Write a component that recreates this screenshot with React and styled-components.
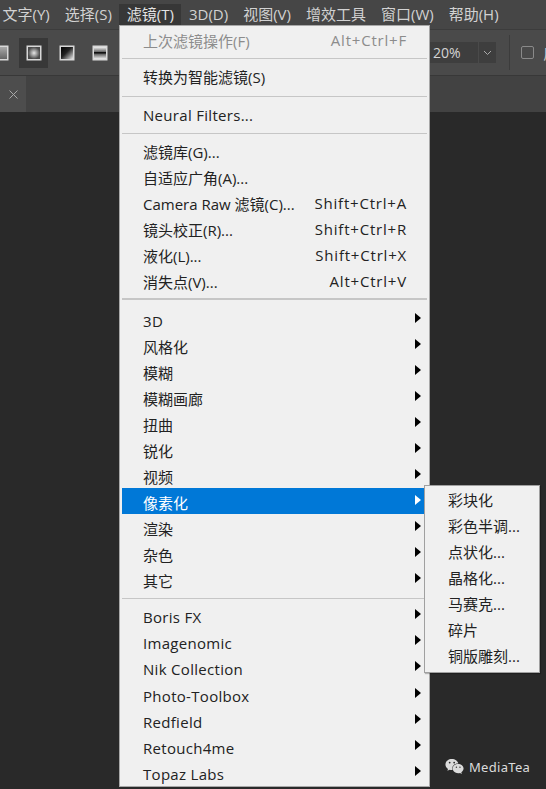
import React from "react";
import styled, { createGlobalStyle } from "styled-components";
import { FaWeixin } from "react-icons/fa";

const Global = createGlobalStyle`
  html, body { margin: 0; padding: 0; background: #292929; }
  body { width: 546px; height: 789px; overflow: hidden; font-family: "Open Sans", "Noto Sans CJK SC", sans-serif; }
`;
const Page = styled.div`
  position: relative; width: 546px; height: 789px; overflow: hidden;
  display: flex; flex-direction: column; background: #292929;
`;
const MenuBar = styled.div`
  height: 29px; flex: none; display: flex; align-items: flex-start; background: #464646;
  border-bottom: 1px solid #3c3c3c;
`;
const MenuTitle = styled.div`
  height: 21px; margin-top: 4px; line-height: 21px; padding: 0 7.5px;
  font-size: 15px; color: ${p => p.$active ? "#e4e4e4" : "#d2d2d2"};
  background: ${p => p.$active ? "#373737" : "transparent"}; white-space: nowrap;
  &:first-child { padding-left: 2.5px; }
`;
const ToolBar = styled.div`
  height: 45px; flex: none; display: flex; align-items: center; background: #4a4a4a;
  border-bottom: 1px solid #383838;
  & > :first-child { margin-left: -14px; }
`;
const ToolIcon = styled.div`
  width: 29px; height: 30px; flex: none; margin-right: ${p => p.$gap || 0}px; display: flex; align-items: center; justify-content: center;
  background: ${p => p.$on ? "#383838" : "transparent"};
`;
const ToolSpacer = styled.div`
  width: ${p => p.$w}px; flex: none;
`;
const Opacity = styled.div`
  width: 48px; height: 21px; line-height: 21px; padding-left: 3px; background: #3e3e3e; flex: none;
  font-size: 14px; color: #d4d4d4; box-sizing: border-box;
`;
const Caret = styled.div`
  width: 17px; height: 21px; margin-left: 1px; background: #3e3e3e; flex: none; display: flex; align-items: center; justify-content: center;
`;
const Divider = styled.div`
  width: 1px; height: 35px; flex: none; margin: 0 11px 0 13px; background: #3c3c3c;
`;
const CheckBox = styled.div`
  width: 11px; height: 11px; flex: none; border: 1px solid #8a8a8a; border-radius: 2px;
`;
const ToolLabel = styled.div`
  margin-left: 9px; font-size: 14px; color: #d2d2d2; white-space: nowrap;
`;
const TabBar = styled.div`
  height: 36px; flex: none; display: flex; background: #424242;
`;
const Tab = styled.div`
  width: 26px; background: #4d4d4d; display: flex; align-items: center; justify-content: center;
`;
const Menu = styled.div`
  position: absolute; left: 119px; top: 25px; width: 311px; height: 762px; box-sizing: border-box;
  background: #f0f0f0; border: 1px solid #a8a8a8; padding: 0 2px;
`;
const Row = styled.div`
  height: ${p => p.$h || 26}px; box-sizing: border-box; display: flex; align-items: center; justify-content: space-between;
  padding: ${p => p.$cjk ? 2 : 4}px 20px 0 21px; font-size: 15px; white-space: nowrap; position: relative;
  letter-spacing: ${p => p.$cjk ? 0 : .3}px;
  color: ${p => p.$off ? "#8c8c8c" : p.$sel ? "#fff" : "#222"};
  background: ${p => p.$sel ? "#0078d7" : "transparent"};
`;
const Keys = styled.span`
  letter-spacing: .8px;
`;
const Sep = styled.div`
  height: ${p => p.$thick ? 2 : 1}px; margin: ${p => p.$top}px 0 ${p => p.$bot}px; background: #c6c6c6;
`;
const Arrow = styled.span`
  position: absolute; right: 6px; top: calc(50% - 1px); transform: translateY(-50%); width: 0; height: 0;
  border-left: 6px solid ${p => p.$sel ? "#fff" : "#000"}; border-top: 5px solid transparent; border-bottom: 5px solid transparent;
`;
const SubMenu = styled.div`
  position: absolute; left: 424px; top: 485px; width: 116px; height: 188px; box-sizing: border-box;
  background: #f0f0f0; border: 1px solid #a0a0a0; padding: 1px 0 0 23px; box-shadow: 1px 1px 1px rgba(0,0,0,.25);
`;
const SubRow = styled.div`
  height: 26px; line-height: 26px; font-size: 15px; color: #222; white-space: nowrap;
`;
const Mark = styled.div`
  position: absolute; left: 445px; top: 757px; display: flex; align-items: center; gap: 5px;
  color: #dcdcdc; font-size: 13px; letter-spacing: .3px; font-family: "Noto Sans", sans-serif;
`;

const Swatch = ({ id, stops, radial, diag, bars }) => (
  <svg width="16" height="16" viewBox="0 0 16 16">
    <defs>
      {radial ? (
        <radialGradient id={id}><stop offset="0" stopColor="#e6e6e6" /><stop offset="1" stopColor="#4a4a4a" /></radialGradient>
      ) : (
        <linearGradient id={id} x1="0" y1="0" x2={diag ? 1 : 0} y2="1">
          {stops.map(([o, c]) => <stop key={o} offset={o} stopColor={c} />)}
        </linearGradient>
      )}
    </defs>
    <rect x="0.5" y="0.5" width="15" height="15" fill="#d8d8d8" />
    <rect x="2" y="2" width="12" height="12" fill={`url(#${id})`} />
    {bars && <rect x="2" y="7" width="12" height="1.5" fill="#111" />}
  </svg>
);

const titles = [
  ["文字(Y)"], ["选择(S)"], ["滤镜(T)", true], ["3D(D)"], ["视图(V)"], ["增效工具"], ["窗口(W)"], ["帮助(H)"],
];
const groups = [
  { rows: [{ t: "上次滤镜操作(F)", k: "Alt+Ctrl+F", off: true }], top: 6, bot: 3 },
  { rows: [{ t: "转换为智能滤镜(S)" }], top: 8, bot: 3 },
  { rows: [{ t: "Neural Filters..." }], top: 7, bot: 3 },
  { rows: [{ t: "滤镜库(G)..." }, { t: "自适应广角(A)..." }, { t: "Camera Raw 滤镜(C)...", k: "Shift+Ctrl+A" }, { t: "镜头校正(R)...", k: "Shift+Ctrl+R" }, { t: "液化(L)...", k: "Shift+Ctrl+X" }, { t: "消失点(V)...", k: "Alt+Ctrl+V" }], thick: true, top: 5, bot: 6 },
  { rows: ["3D", "风格化", "模糊", "模糊画廊", "扭曲", "锐化", "视频", "像素化", "渲染", "杂色", "其它"].map(t => ({ t, a: true, sel: t === "像素化" })), top: 6, bot: 3 },
  { rows: ["Boris FX", "Imagenomic", "Nik Collection", "Photo-Toolbox", "Redfield", "Retouch4me", "Topaz Labs"].map(t => ({ t, a: true })), h: 26.17 },
];
const subs = ["彩块化", "彩色半调...", "点状化...", "晶格化...", "马赛克...", "碎片", "铜版雕刻..."];
const hasCjk = t => /[^\x00-\x7f]/.test(t);

export default function App() {
  return (
    <Page>
      <Global />
      <MenuBar>
        {titles.map(([t, a]) => <MenuTitle key={t} $active={a}>{t}</MenuTitle>)}
      </MenuBar>
      <ToolBar>
        <ToolIcon $gap={4}><Swatch id="a" stops={[[0, "#aaa"], [1, "#666"]]} /></ToolIcon>
        <ToolIcon $on $gap={4}><Swatch id="b" radial /></ToolIcon>
        <ToolIcon $gap={4}><Swatch id="c" diag stops={[[0, "#000"], [.45, "#222"], [1, "#e8e8e8"]]} /></ToolIcon>
        <ToolIcon><Swatch id="d" bars stops={[[0, "#eee"], [.5, "#444"], [1, "#eee"]]} /></ToolIcon>
        <ToolSpacer $w={316} />
        <Opacity>20%</Opacity>
        <Caret>
          <svg width="9" height="6" viewBox="0 0 9 6"><path d="M1 1l3.5 3.5L8 1" fill="none" stroke="#aaa" /></svg>
        </Caret>
        <Divider />
        <CheckBox />
        <ToolLabel>反向</ToolLabel>
      </ToolBar>
      <TabBar>
        <Tab>
          <svg width="9" height="9" viewBox="0 0 9 9"><path d="M.5.5l8 8M8.5.5l-8 8" stroke="#a8a8a8" /></svg>
        </Tab>
      </TabBar>
      <Menu>
        {groups.map((g, i) => (
          <React.Fragment key={i}>
            {g.rows.map(r => (
              <Row key={r.t} $off={r.off} $sel={r.sel} $h={g.h} $cjk={hasCjk(r.t)}>
                <span>{r.t}</span>
                {r.k && <Keys>{r.k}</Keys>}
                {r.a && <Arrow $sel={r.sel} />}
              </Row>
            ))}
            {i < groups.length - 1 && <Sep $thick={g.thick} $top={g.top} $bot={g.bot} />}
          </React.Fragment>
        ))}
      </Menu>
      <SubMenu>
        {subs.map(s => <SubRow key={s}>{s}</SubRow>)}
      </SubMenu>
      <Mark><FaWeixin size={19} />MediaTea</Mark>
    </Page>
  );
}
